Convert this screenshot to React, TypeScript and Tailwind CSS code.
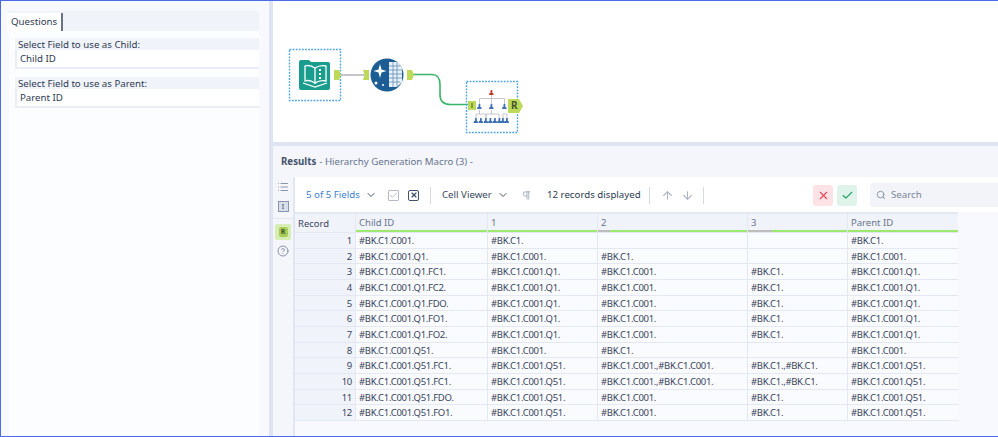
import { ChevronDown, Check, X, Search, ArrowUp, ArrowDown, Pilcrow, List, CircleHelp } from 'lucide-react'

const columns = [
  { name: 'Child ID', width: 'w-[131px]' },
  { name: '1', width: 'w-[109px]' },
  { name: '2', width: 'w-[149px]', mark: 'w-[12px]' },
  { name: '3', width: 'w-[99px]', mark: 'w-[24px]' },
  { name: 'Parent ID', width: 'w-[110px]' },
]

const rows = [
  ['#BK.C1.C001.', '#BK.C1.', '', '', '#BK.C1.'],
  ['#BK.C1.C001.Q1.', '#BK.C1.C001.', '#BK.C1.', '', '#BK.C1.C001.'],
  ['#BK.C1.C001.Q1.FC1.', '#BK.C1.C001.Q1.', '#BK.C1.C001.', '#BK.C1.', '#BK.C1.C001.Q1.'],
  ['#BK.C1.C001.Q1.FC2.', '#BK.C1.C001.Q1.', '#BK.C1.C001.', '#BK.C1.', '#BK.C1.C001.Q1.'],
  ['#BK.C1.C001.Q1.FDO.', '#BK.C1.C001.Q1.', '#BK.C1.C001.', '#BK.C1.', '#BK.C1.C001.Q1.'],
  ['#BK.C1.C001.Q1.FO1.', '#BK.C1.C001.Q1.', '#BK.C1.C001.', '#BK.C1.', '#BK.C1.C001.Q1.'],
  ['#BK.C1.C001.Q1.FO2.', '#BK.C1.C001.Q1.', '#BK.C1.C001.', '#BK.C1.', '#BK.C1.C001.Q1.'],
  ['#BK.C1.C001.Q51.', '#BK.C1.C001.', '#BK.C1.', '', '#BK.C1.C001.'],
  ['#BK.C1.C001.Q51.FC1.', '#BK.C1.C001.Q51.', '#BK.C1.C001.,#BK.C1.C001.', '#BK.C1.,#BK.C1.', '#BK.C1.C001.Q51.'],
  ['#BK.C1.C001.Q51.FC1.', '#BK.C1.C001.Q51.', '#BK.C1.C001.,#BK.C1.C001.', '#BK.C1.,#BK.C1.', '#BK.C1.C001.Q51.'],
  ['#BK.C1.C001.Q51.FDO.', '#BK.C1.C001.Q51.', '#BK.C1.C001.', '#BK.C1.', '#BK.C1.C001.Q51.'],
  ['#BK.C1.C001.Q51.FO1.', '#BK.C1.C001.Q51.', '#BK.C1.C001.', '#BK.C1.', '#BK.C1.C001.Q51.'],
]

const lowerPeople = [476, 481, 486, 490.500, 495, 499.500, 503, 507]

function Question({ label, value }: { label: string; value: string }) {
  return (
    <div>
      <div className="h-[12px] pl-[3px] leading-[14px] bg-[#f1f3fa]">{label}</div>
      <div className="h-[19px] pl-[3px] leading-[18px] bg-white border-b-2 border-l-2 border-[#e9edf7]">{value}</div>
    </div>
  )
}

function Person({ x, y, color }: { x: number; y: number; color: string }) {
  return <path d={`M${x - 0.8} ${y}h1.600v3h0.800l0.500 2h-4.600l0.500-2h0.800z`} fill={color} />
}

function Canvas() {
  return (
    <div className="relative h-[141px] bg-white">
      <svg className="absolute left-0 top-0" width="725" height="141" viewBox="273 1 725 141">
        {/* input tool */}
        <rect x="289.500" y="49.500" width="51" height="51" fill="none" stroke="#4ba3e6" strokeWidth="1.400" strokeDasharray="1.800 1.300" />
        <path d="M299 62a2 2 0 0 1 2-2h8l2 2h17a2 2 0 0 1 2 2v24a2 2 0 0 1-2 2h-27a2 2 0 0 1-2-2z" fill="#1b9d8e" />
        <path d="M315 68c-3-2-7-3-10-2v15c3-1 7 0 10 2zM315 68c3-2 7-3 11-2v15c-4-1-8 0-11 2z" fill="none" stroke="#fff" strokeWidth="1.300" />
        <path d="M303 83l12 4 12-4" fill="none" stroke="#fff" strokeWidth="1.300" />
        <rect x="319" y="69" width="2" height="2" fill="#fff" />
        <rect x="319" y="73" width="2" height="2" fill="#fff" />
        <rect x="319" y="77" width="2" height="2" fill="#fff" />
        {/* connections */}
        <path d="M339 75h26" stroke="#a9aeb3" strokeWidth="1.400" fill="none" />
        <path d="M412 74.500h20c6 0 8 4 8 10v10c0 7 4 10 10 10h19" stroke="#3cb46a" strokeWidth="1.600" fill="none" />
        {/* anchors */}
        <path d="M334 70h5l2 5-2 5h-5z" fill="#bcd95a" />
        <path d="M363 70h6v10h-6l1.500-5z" fill="#bcd95a" />
        <path d="M407 70h5l2 5-2 5h-5z" fill="#bcd95a" />
        {/* formula tool */}
        <circle cx="387" cy="75" r="16.500" fill="#1c5d94" />
        <path d="M389 62h9l4 6v14l-5 5h-8z" fill="#e8f0f8" />
        <path d="M389 66h11M389 70h13M389 74h13M389 78h13M389 82h11M393 62v25M397 62v25" stroke="#5f8db5" strokeWidth="0.800" />
        <path d="M380 64l1.500 5.500 5 1.500-5 1.500-1.500 5.500-1.500-5.500-5-1.500 5-1.500z" fill="#fff" />
        <circle cx="376" cy="83" r="1.500" fill="#fff" />
        <circle cx="383" cy="85" r="1" fill="#fff" />
        {/* macro tool */}
        <rect x="466.500" y="81.500" width="51" height="51" fill="none" stroke="#4ba3e6" strokeWidth="1.400" strokeDasharray="1.800 1.300" />
        <path d="M491.500 95v3M479.500 104v-5.500h25v5.500M491.500 98v6M491.500 110v4M479.500 110v4M476 118v-4h10v4M486 118v-4h13v4M503 118v-4h4v4" stroke="#c4c8cc" strokeWidth="1" fill="none" />
        <Person x={491.500} y={90} color="#c0392b" />
        <Person x={479.500} y={104} color="#3f6fb5" />
        <Person x={491.500} y={104} color="#3f6fb5" />
        <Person x={504.500} y={104} color="#3f6fb5" />
        {lowerPeople.map(x => (
          <Person key={x} x={x} y={118} color="#3f6fb5" />
        ))}
        <path d="M468 101h8v9h-8z" fill="#bcd95a" />
        <rect x="471.500" y="103" width="1" height="5" fill="#4a5d2a" />
        <path d="M508 99h11l4 7-4 7h-11z" fill="#bcd95a" />
      </svg>
      <span className="absolute left-[238px] top-[98px] text-[10px] leading-[13px] font-bold text-[#46552f]">R</span>
    </div>
  )
}

export default function App() {
  return (
    <div className="w-[998px] h-[437px] flex flex-col overflow-hidden border-t border-l border-b border-[#4a6be8] bg-[#dfe4f2] text-[9.7px] text-[#2e3b52] font-['Noto_Sans',sans-serif]">
      <div className="flex-1 min-h-0 flex">
        {/* Questions panel */}
        <div className="w-[268px] shrink-0 mr-[4px] pl-[6px] pr-[10px] pt-[10px] bg-[#f7f9fe]">
          <div className="h-[20px] flex items-end bg-[#f1f3fa]">
            <div className="w-[56px] h-[18px] pl-[4px] leading-[17px] bg-white border-r-2 border-[#6b7280]">Questions</div>
          </div>
          <div className="h-[405px] ml-[2px] bg-[#fcfdff] pt-[7px] pl-[6px] flex flex-col gap-[8px]">
            <Question label="Select Field to use as Child:" value="Child ID" />
            <Question label="Select Field to use as Parent:" value="Parent ID" />
          </div>
        </div>

        {/* Right side */}
        <div className="flex-1 min-w-0 flex flex-col">
          <Canvas />
          <div className="h-[4px] bg-[#dfe4f2]" />
          <div className="h-[31px] pl-[8px] pt-[1px] flex items-center gap-[3px] bg-[#f4f6fc] text-[#67738c]">
            <span className="font-bold text-[#45526b]">Results</span>
            <span>- Hierarchy Generation Macro (3) -</span>
          </div>
          <div className="flex-1 min-h-0 flex">
            <div className="w-[22px] shrink-0 pt-[4px] flex flex-col items-center border-r-2 border-[#e2e6f2] bg-[#f4f6fc]">
              <List className="w-[12px] h-[12px] text-[#67738c]" strokeWidth={1.5} />
              <div className="mt-[8px] w-[11px] h-[11px] border border-[#8a94ad] bg-[#d9deeb] text-[7px] leading-[9px] text-center">I</div>
              <div className="mt-[6px] w-[20px] h-px bg-[#e2e6f2]" />
              <div className="mt-[5px] w-[16px] h-[16px] rounded-[2px] bg-[#d6eeb4] flex items-center justify-center">
                <span className="w-[9px] h-[10px] rounded-[2px] bg-[#a8cc5a] text-[7px] leading-[10px] text-center font-bold text-[#3f5226]">R</span>
              </div>
              <CircleHelp className="mt-[5px] w-[12px] h-[12px] text-[#67738c]" strokeWidth={1.5} />
            </div>
            <div className="flex-1 min-w-0 flex flex-col bg-[#f7f9fe]">
              {/* Toolbar */}
              <div className="h-[35px] shrink-0 pt-[1px] flex items-center bg-white">
                <span className="ml-[11px] w-[54px] whitespace-nowrap text-[#3d7fd1]">5 of 5 Fields</span>
                <ChevronDown className="ml-[5px] w-[12px] h-[12px] text-[#45526b]" />
                <div className="ml-[11px] w-[11px] h-[11px] rounded-[1px] border border-[#b4bac8] flex items-center justify-center">
                  <Check className="w-[9px] h-[9px] text-[#a4abba]" />
                </div>
                <div className="ml-[9px] w-[11px] h-[11px] rounded-[2px] border border-[#42506a] flex items-center justify-center">
                  <X className="w-[8px] h-[8px] text-[#42506a]" strokeWidth={3.5} />
                </div>
                <div className="ml-[11px] w-px h-[17px] bg-[#d5dae6]" />
                <span className="ml-[11px] w-[51px] whitespace-nowrap text-[#3a465c]">Cell Viewer</span>
                <ChevronDown className="ml-[4px] w-[12px] h-[12px] text-[#45526b]" />
                <Pilcrow className="ml-[12px] w-[11px] h-[11px] text-[#a4abba]" />
                <span className="ml-[15px] w-[91px] whitespace-nowrap text-[#2e3b52]">12 records displayed</span>
                <div className="ml-[11px] w-px h-[17px] bg-[#d5dae6]" />
                <ArrowUp className="ml-[11px] w-[13px] h-[13px] text-[#aeb4c2]" />
                <ArrowDown className="ml-[7px] w-[13px] h-[13px] text-[#aeb4c2]" />
                <div className="ml-[9px] w-px h-[17px] bg-[#d5dae6]" />
                <div className="ml-[109px] w-[20px] h-[21px] rounded-[3px] bg-[#fde3e6] flex items-center justify-center">
                  <X className="w-[13px] h-[13px] text-[#e8475b]" />
                </div>
                <div className="ml-[4px] w-[20px] h-[21px] rounded-[3px] bg-[#dff3ea] flex items-center justify-center">
                  <Check className="w-[13px] h-[13px] text-[#1f9d63]" />
                </div>
                <div className="ml-[13px] flex-1 h-[24px] pl-[6px] flex items-center gap-[5px] rounded-l-[3px] bg-[#f2f4f9] text-[#7d8799]">
                  <Search className="w-[10px] h-[10px]" />
                  <span>Search</span>
                </div>
              </div>
              {/* Grid */}
              <div className="w-fit pt-[2px] pb-[1px] flex flex-col gap-[1px] bg-[#e4e8f3] text-[9.5px] tracking-[-0.3px]">
                <div className="flex gap-[1px] h-[18px]">
                  <div className="w-[60px] pl-[3px] leading-[19px] tracking-normal bg-[#f1f3fa] text-[#3a465c]">Record</div>
                  {columns.map(col => (
                    <div key={col.name} className={`${col.width} relative pl-[3px] leading-[18px] tracking-normal bg-[#f1f3fa] text-[#67738c] border-b-2 border-[#9de86f]`}>
                      {col.name}
                      {col.mark && <div className={`absolute left-0 -bottom-[2px] h-[2px] ${col.mark} bg-[#bdbdbd]`} />}
                    </div>
                  ))}
                </div>
                {rows.map((row, i) => (
                  <div key={i} className="flex gap-[1px] h-[14.66px] text-[#39445a]">
                    <div className="w-[60px] pr-[3px] leading-[15px] text-right bg-[#f1f3fa]">{i + 1}</div>
                    {row.map((cell, j) => (
                      <div key={j} className={`${columns[j].width} pl-[3px] leading-[15px] whitespace-nowrap overflow-hidden bg-[#fafbff]`}>{cell}</div>
                    ))}
                  </div>
                ))}
              </div>
            </div>
          </div>
        </div>
      </div>
    </div>
  )
}
